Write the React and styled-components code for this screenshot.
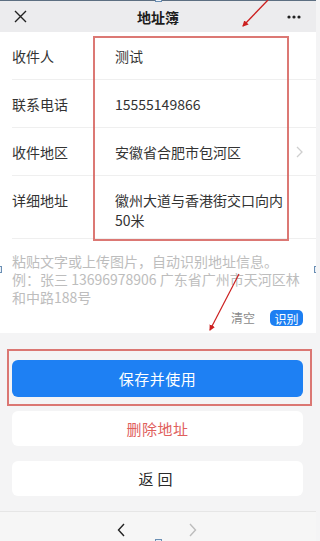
import React from "react";
import styled, { createGlobalStyle } from "styled-components";

const Global = createGlobalStyle`
  html, body { margin: 0; padding: 0; }
  body {
    width: 316px;
    height: 541px;
    overflow: hidden;
    font-family: "Noto Sans CJK SC", "Noto Sans", sans-serif;
    background: #f4f4f5;
  }
  * { box-sizing: border-box; }
`;

const Page = styled.div`
  position: relative;
  width: 316px;
  height: 541px;
  display: flex;
  flex-direction: column;
  background: #f4f4f5;
  overflow: hidden;
`;

const Header = styled.header`
  height: 32px;
  flex: 0 0 32px;
  background: #ececee;
  display: grid;
  grid-template-columns: 40px 1fr 40px;
  align-items: center;
  border-top: 1.5px solid #5d6f82;
`;

const IconCell = styled.div`
  display: flex;
  align-items: center;
  justify-content: ${(p) => (p.$end ? "flex-end" : "flex-start")};
  padding: ${(p) => (p.$end ? "0 15px 0 0" : "0 0 0 14px")};
`;

const Title = styled.div`
  text-align: center;
  font-size: 14px;
  font-weight: 700;
  color: #1c1c1c;
  line-height: 20px;
`;

const Form = styled.section`
  position: relative;
  background: #fff;
  padding-left: 12px;
`;

const Row = styled.div`
  display: flex;
  align-items: flex-start;
  padding: ${(p) => (p.$tall ? "14px 0 8px" : "14px 0 13px")};
  border-bottom: 1px solid #efefef;
  font-size: 14px;
  line-height: 20px;
`;

const Label = styled.div`
  flex: 0 0 103px;
  color: #333;
`;

const Value = styled.div`
  flex: 0 0 170px;
  color: #333;
`;

const Chevron = styled.div`
  margin-left: auto;
  padding-right: 13px;
  display: flex;
  align-items: center;
  height: 20px;
`;

const Paste = styled.section`
  background: #fff;
  padding: 13px 12px 7px;
`;

const Placeholder = styled.div`
  font-size: 14px;
  line-height: 18px;
  color: #bdbdbd;
  height: 54px;
`;

const Actions = styled.div`
  margin-top: 4px;
  display: flex;
  justify-content: flex-end;
  align-items: center;
  gap: 15px;
  padding-right: 1px;
`;

const TextBtn = styled.span`
  font-size: 12px;
  line-height: 16px;
  color: #8a8a8a;
`;

const Pill = styled.span`
  display: inline-flex;
  align-items: center;
  justify-content: center;
  width: 33px;
  height: 16px;
  border-radius: 5px;
  background: #1d7ff2;
  color: #fff;
  font-size: 12px;
`;

const ButtonArea = styled.section`
  flex: 1;
  display: flex;
  flex-direction: column;
  gap: 14px;
  padding: 27px 13px 0 12px;
`;

const Button = styled.div`
  height: ${(p) => (p.$primary ? "37px" : "35px")};
  border-radius: 6px;
  display: flex;
  align-items: center;
  justify-content: center;
  font-size: 15px;
  letter-spacing: ${(p) => (p.$spaced ? "4px" : "0.5px")};
  background: ${(p) => (p.$primary ? "#1e80f3" : "#fff")};
  color: ${(p) => p.$color};
  margin-top: ${(p) => (p.$extra ? "1px" : "0")};
`;

const BottomBar = styled.footer`
  flex: 0 0 30px;
  border-top: 1px solid #e6e6e6;
  background: #f6f6f6;
  display: flex;
  justify-content: center;
  align-items: center;
  gap: 64px;
  padding: 6px 2px 0 0;
`;

const Annot = styled.div`
  position: absolute;
  z-index: 5;
  border: 2px solid rgba(214, 96, 92, 0.85);
  pointer-events: none;
`;

const Handle = styled.div`
  position: absolute;
  z-index: 6;
  width: 4px;
  height: 7px;
  background: #e9f0f8;
  border: 1px solid #6b8fb4;
`;

const ArrowLayer = styled.svg`
  position: absolute;
  z-index: 7;
  left: 0;
  top: 0;
  pointer-events: none;
`;

export default function App() {
  return (
    <>
      <Global />
      <Page>
        <Header>
          <IconCell>
            <svg width="13" height="13" viewBox="0 0 13 13">
              <path d="M1 1 L12 12 M12 1 L1 12" stroke="#222" strokeWidth="1.4" fill="none" />
            </svg>
          </IconCell>
          <Title>地址簿</Title>
          <IconCell $end>
            <svg width="14" height="4" viewBox="0 0 14 4">
              <circle cx="2" cy="2" r="1.6" fill="#222" />
              <circle cx="7" cy="2" r="1.6" fill="#222" />
              <circle cx="12" cy="2" r="1.6" fill="#222" />
            </svg>
          </IconCell>
        </Header>
        <Form>
          <Row>
            <Label>收件人</Label>
            <Value>测试</Value>
          </Row>
          <Row>
            <Label>联系电话</Label>
            <Value>15555149866</Value>
          </Row>
          <Row>
            <Label>收件地区</Label>
            <Value>安徽省合肥市包河区</Value>
            <Chevron>
              <svg width="7" height="12" viewBox="0 0 7 12">
                <path d="M1 1 L6 6 L1 11" stroke="#cfcfcf" strokeWidth="1.3" fill="none" />
              </svg>
            </Chevron>
          </Row>
          <Row $tall>
            <Label>详细地址</Label>
            <Value>徽州大道与香港街交口向内50米</Value>
          </Row>
        </Form>
        <Paste>
          <Placeholder>
            粘贴文字或上传图片，自动识别地址信息。例：张三 13696978906 广东省广州市天河区林和中路188号
          </Placeholder>
          <Actions>
            <TextBtn>清空</TextBtn>
            <Pill>识别</Pill>
          </Actions>
        </Paste>
        <ButtonArea>
          <Button $primary $color="#fff">保存并使用</Button>
          <Button $color="#e0605c">删除地址</Button>
          <Button $extra $spaced $color="#2a2a2a">返回</Button>
        </ButtonArea>
        <BottomBar>
          <svg width="8" height="14" viewBox="0 0 8 14">
            <path d="M7 1 L1.5 7 L7 13" stroke="#222" strokeWidth="1.4" fill="none" />
          </svg>
          <svg width="8" height="14" viewBox="0 0 8 14">
            <path d="M1 1 L6.5 7 L1 13" stroke="#bdbdbd" strokeWidth="1.4" fill="none" />
          </svg>
        </BottomBar>

        <Annot style={{ left: 93, top: 36, width: 196, height: 205 }} />
        <Annot style={{ left: 7, top: 349, width: 305, height: 57 }} />
        <Handle style={{ left: -2, top: 266 }} />
        <Handle style={{ right: -2, top: 266 }} />
        <Handle style={{ left: 155, top: -3, width: 7, height: 5 }} />
        <Handle style={{ left: 155, bottom: -3, width: 7, height: 5 }} />
        <ArrowLayer width="316" height="541" viewBox="0 0 316 541">
          <defs>
            <marker id="ah" markerWidth="6" markerHeight="6" refX="5" refY="3" orient="auto" markerUnits="userSpaceOnUse">
              <path d="M0 0 L6 3 L0 6 Z" fill="#cc1f1f" />
            </marker>
          </defs>
          <line x1="268" y1="0" x2="243" y2="26" stroke="#cc1f1f" strokeWidth="1.3" markerEnd="url(#ah)" />
          <line x1="239" y1="274" x2="210" y2="330" stroke="#cc1f1f" strokeWidth="1.2" markerEnd="url(#ah)" />
        </ArrowLayer>
      </Page>
    </>
  );
}
